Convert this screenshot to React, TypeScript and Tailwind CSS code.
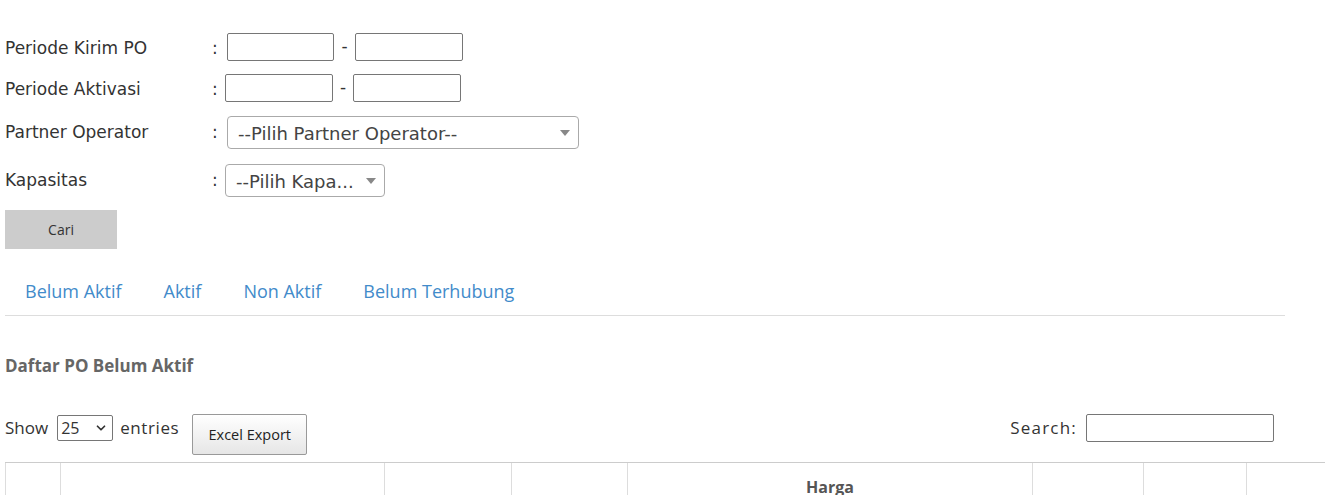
import { ChevronDown } from "lucide-react";

const labelFont = { fontFamily: '"DejaVu Sans", Verdana, sans-serif' };
const uiFont = { fontFamily: '"Open Sans", sans-serif' };

function Field({ label, shift, children }: { label: string; shift?: boolean; children: React.ReactNode }) {
	return (
		<div className="flex items-center">
			<div className={`w-[207px] text-[17px] text-[#333] ${shift ? "translate-y-[2px]" : ""}`}>{label}</div>
			<div className={`w-[14px] text-[17px] text-[#333] ${shift ? "translate-y-[2px]" : ""}`}>:</div>
			{children}
		</div>
	);
}

function Select2({ text, width }: { text: string; width: string }) {
	return (
		<div className={`flex h-[33px] items-center justify-between rounded-[4px] border border-[#aaa] bg-white pl-[10px] pr-[8px] ${width}`}>
			<span className="translate-y-[1px] text-[18px] text-[#444] whitespace-nowrap">{text}</span>
			<span className="h-0 w-0 border-x-[5px] border-t-[6px] border-x-transparent border-t-[#888]" />
		</div>
	);
}

const cols = ["w-[55px]", "w-[324px]", "w-[127px]", "w-[116px]", "w-[405px]", "w-[111px]", "w-[103px]", "w-[160px]"];

export default function App() {
	return (
		<div className="h-[495px] w-[1325px] overflow-hidden bg-white" style={labelFont}>
			<div className="ml-[5px] w-[1280px] pt-[33px]">
				<Field label="Periode Kirim PO" shift>
					<div className="ml-[1px] flex items-center">
						<div className="h-[28px] w-[107px] rounded-[2px] border border-[#767676]" />
						<span className="w-[21px] text-center text-[17px] text-[#333]">-</span>
						<div className="h-[28px] w-[108px] rounded-[2px] border border-[#767676]" />
					</div>
				</Field>
				<div className="mt-[13px]">
					<Field label="Periode Aktivasi" shift>
						<div className="-ml-[1px] flex items-center">
							<div className="h-[28px] w-[108px] rounded-[2px] border border-[#767676]" />
							<span className="w-[20px] text-center text-[17px] text-[#333]">-</span>
							<div className="h-[28px] w-[108px] rounded-[2px] border border-[#767676]" />
						</div>
					</Field>
				</div>
				<div className="mt-[14px]">
					<Field label="Partner Operator">
						<div className="ml-[1px]">
							<Select2 text="--Pilih Partner Operator--" width="w-[352px]" />
						</div>
					</Field>
				</div>
				<div className="mt-[15px]">
					<Field label="Kapasitas">
						<div className="-ml-[1px]">
							<Select2 text="--Pilih Kapa..." width="w-[160px]" />
						</div>
					</Field>
				</div>
				<button
					className="mt-[13px] flex h-[39px] w-[112px] items-center justify-center bg-[#cccccc] text-[14px] text-[#333]"
					style={uiFont}
				>
					Cari
				</button>

				<nav className="mt-[18px] flex border-b border-[#ddd] text-[18px] text-[#428bca]" style={uiFont}>
					<a className="mr-[2px] px-[20px] py-[10px] leading-[28px]">Belum Aktif</a>
					<a className="mr-[2px] px-[20px] py-[10px] leading-[28px]">Aktif</a>
					<a className="mr-[2px] px-[20px] py-[10px] leading-[28px]">Non Aktif</a>
					<a className="mr-[2px] px-[20px] py-[10px] leading-[28px]">Belum Terhubung</a>
				</nav>

				<h3 className="mt-[38px] text-[17px] font-bold leading-[24px] text-[#666]" style={uiFont}>
					Daftar PO Belum Aktif
				</h3>

				<div
					className="mt-[36px] flex items-start justify-between pr-[11px] text-[17px] text-[#333]"
					style={uiFont}
				>
					<div className="flex items-start">
						<div className="flex h-[28px] items-center">
							<span>Show</span>
							<div className="ml-[9px] flex h-[26px] w-[56px] items-center justify-between rounded-[2px] border border-[#767676] pl-[3px] pr-[4px]">
								<span className="text-[16px]">25</span>
								<ChevronDown size={14} strokeWidth={3} />
							</div>
							<span className="ml-[7px] tracking-[0.6px]">entries</span>
						</div>
						<button className="ml-[13px] flex h-[41px] w-[115px] items-center justify-center rounded-[2px] border border-[#999] bg-gradient-to-b from-white to-[#e6e6e6] text-[14.5px] text-[#222]">
							Excel Export
						</button>
					</div>
					<div className="flex h-[28px] items-center">
						<span className="tracking-[1.2px]">Search:</span>
						<div className="ml-[9px] h-[28px] w-[188px] rounded-[2px] border border-[#767676]" />
					</div>
				</div>

				<div className="mt-[7px] flex h-[40px] w-[1460px] border-t border-[#ccc]" style={uiFont}>
					{cols.map((c, i) => (
						<div key={i} className={`${c} flex shrink-0 justify-center border-l border-[#ddd] pt-[14px]`}>
							{i === 4 ? <span className="text-[16px] font-bold leading-[20px] text-[#555]">Harga</span> : null}
						</div>
					))}
				</div>
			</div>
		</div>
	);
}
